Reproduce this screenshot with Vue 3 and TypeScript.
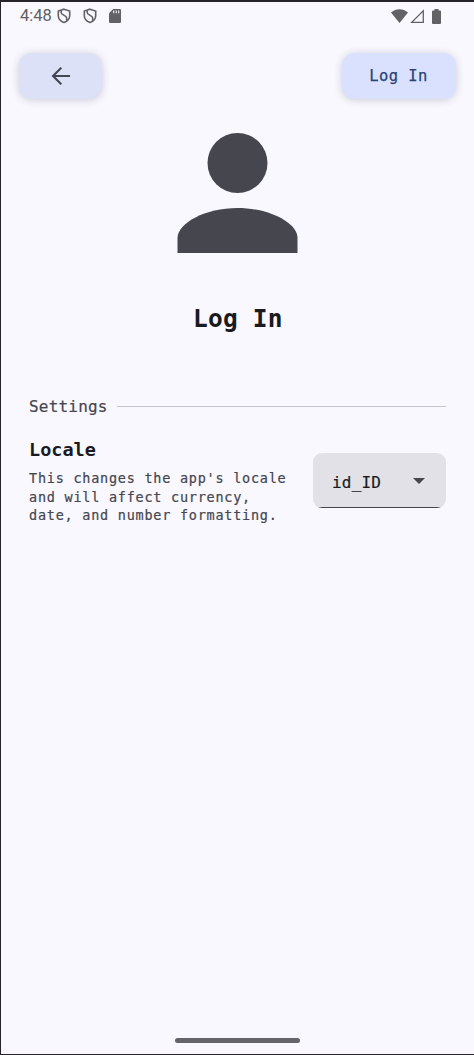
<script setup lang="ts">
import { ref } from 'vue'

const time = ref('4:48')
const locale = ref('id_ID')
const description: string[] = [
  "This changes the app's locale",
  'and will affect currency,',
  'date, and number formatting.',
]
</script>

<template>
  <main class="screen">
    <header class="status">
      <span class="time">{{ time }}</span>
      <svg v-for="n in 2" :key="n" class="shield" viewBox="0 0 14 16">
        <path d="M7 1.2 12.700 3v4.500c0 3.300-2.400 5.800-5.700 7.100-3.300-1.300-5.700-3.800-5.700-7.100V3z" fill="none" stroke="#626164" stroke-width="1.600" />
        <path d="M4.200 2.500V4.800C4.200 7 9.700 7.300 9.700 10V13" fill="none" stroke="#626164" stroke-width="1.600" />
      </svg>
      <svg class="sd" viewBox="0 0 12 14">
        <path d="M4.200 0H10.800Q12 0 12 1.200V12.800Q12 14 10.800 14H1.200Q0 14 0 12.800V4.200z" fill="#626164" />
        <path d="M4.700 1.500V4.300M7.200 1.500V4.300M9.700 1.500V4.300" stroke="#f9f8ff" stroke-width="1.1" />
      </svg>
      <span class="grow"></span>
      <svg class="wifi" viewBox="0 0 17 14">
        <path d="M0 3.500C4.800-1 12.200-1 17 3.500L8.500 14z" fill="#626164" />
      </svg>
      <svg class="signal" viewBox="0 0 14 14">
        <path d="M1.700 13.300H13.300V1.700z" fill="none" stroke="#626164" stroke-width="1.300" />
      </svg>
      <svg class="battery" viewBox="0 0 9 15">
        <path d="M2.500 0H6.500V1.400H8Q9 1.400 9 2.400V14Q9 15 8 15H1Q0 15 0 14V2.400Q0 1.400 1 1.400H2.500z" fill="#626164" />
      </svg>
    </header>

    <nav class="bar">
      <button class="btn back" aria-label="Back">
        <svg viewBox="0 0 20 20">
          <path d="M19 10H2M10.300 1.700 2 10l8.300 8.300" fill="none" stroke="#444653" stroke-width="2.100" />
        </svg>
      </button>
      <button class="btn login"><span>Log In</span></button>
    </nav>

    <svg class="avatar" viewBox="-0.5 0 121 120">
      <circle cx="60" cy="30" r="30" fill="#46464f" />
      <path d="M0 120V105C0 90 28 75 60 75S120 90 120 105V120z" fill="#46464f" />
    </svg>
    <h1 class="title"><span>Log In</span></h1>

    <div class="section">
      <span class="section-name">Settings</span>
      <span class="rule"></span>
    </div>

    <div class="setting">
      <div class="copy">
        <h2>Locale</h2>
        <p v-for="line in description" :key="line">{{ line }}</p>
      </div>
      <div class="select" role="button">
        <span>{{ locale }}</span>
        <svg viewBox="0 0 12 6"><path d="M0 0H12L6 6z" fill="#46464f" /></svg>
      </div>
    </div>

    <div class="home"></div>
  </main>
</template>

<style>
body {
  margin: 0;
}
</style>

<style scoped>
.screen {
  box-sizing: border-box;
  width: 474px;
  height: 1055px;
  display: flex;
  flex-direction: column;
  background: #f9f8ff;
  border-top: 2px solid #26242a;
  border-left: 1px solid #26242a;
  border-bottom: 1px solid #26242a;
  font-family: "DejaVu Sans Mono", monospace;
  color: #1a1b21;
  overflow: hidden;
}
svg {
  display: block;
  flex: none;
}
.status {
  display: flex;
  align-items: center;
  height: 28px;
  padding: 0 33px 0 19px;
}
.time {
  width: 37px;
  font: 16.500px/28px Roboto, sans-serif;
  color: #626164;
}
.shield {
  width: 14px;
  height: 16px;
  margin-right: 11.500px;
}
.sd {
  width: 12px;
  height: 14px;
  margin-left: 1px;
}
.grow {
  flex: 1;
}
.wifi {
  width: 17px;
  height: 14px;
  margin-right: 2px;
}
.signal {
  width: 14px;
  height: 14px;
  margin-right: 8px;
}
.battery {
  width: 9px;
  height: 15px;
}
.bar {
  display: flex;
  justify-content: space-between;
  padding: 23px 18px 0;
}
.btn {
  display: flex;
  align-items: center;
  justify-content: center;
  height: 46px;
  padding: 0;
  border: 0;
  border-radius: 13px;
  box-shadow: 0 1px 8px rgba(30, 20, 40, 0.2);
}
.back {
  width: 83px;
  background: #dde1f7;
}
.back svg {
  width: 20px;
  height: 20px;
}
.login {
  width: 114px;
  padding-right: 1px;
  background: #dae1ff;
  color: #2b4175;
  font: 15.5px/20px "DejaVu Sans Mono", monospace;
  letter-spacing: 0.4px;
  -webkit-text-stroke: 0.25px currentColor;
}
.avatar {
  width: 121px;
  height: 120px;
  margin: 34px auto 0 176px;
}
.title {
  margin: 48px 0 0;
  padding-left: 192px;
  font-size: 24.500px;
  line-height: 36px;
  font-weight: 700;
  letter-spacing: 0.2px;
}
.section {
  display: flex;
  align-items: center;
  height: 24px;
  margin-top: 57px;
  padding: 0 28px;
}
.section-name {
  width: 88px;
  padding-top: 1px;
  font-size: 16px;
  line-height: 24px;
  letter-spacing: 0.2px;
  color: #46464f;
  -webkit-text-stroke: 0.2px currentColor;
}
.rule {
  flex: 1;
  height: 1px;
  background: #c7c6d0;
}
.setting {
  display: flex;
  justify-content: space-between;
  padding: 19px 28px 0;
}
h2 {
  margin: 0 0 6px;
  font-size: 18.500px;
  line-height: 26px;
  font-weight: 700;
  letter-spacing: 0;
}
p {
  margin: 0;
  font-size: 13.500px;
  line-height: 18.500px;
  letter-spacing: 0.750px;
  color: #46464f;
  white-space: nowrap;
  -webkit-text-stroke: 0.2px currentColor;
}
.select {
  box-sizing: border-box;
  display: flex;
  justify-content: space-between;
  width: 133px;
  height: 55px;
  margin-top: 16px;
  padding: 18px 21px 0 19px;
  border-radius: 9px;
  background: linear-gradient(#46464f, #46464f) bottom / 100% 1px no-repeat #e2e1e8;
  font-size: 16px;
  line-height: 24px;
  letter-spacing: 0.2px;
  -webkit-text-stroke: 0.2px currentColor;
}
.select svg {
  width: 12px;
  height: 6px;
  margin-top: 7px;
}
.home {
  width: 125px;
  height: 5px;
  margin: auto 0 11px 174px;
  border-radius: 3px;
  background: #656469;
}
</style>
